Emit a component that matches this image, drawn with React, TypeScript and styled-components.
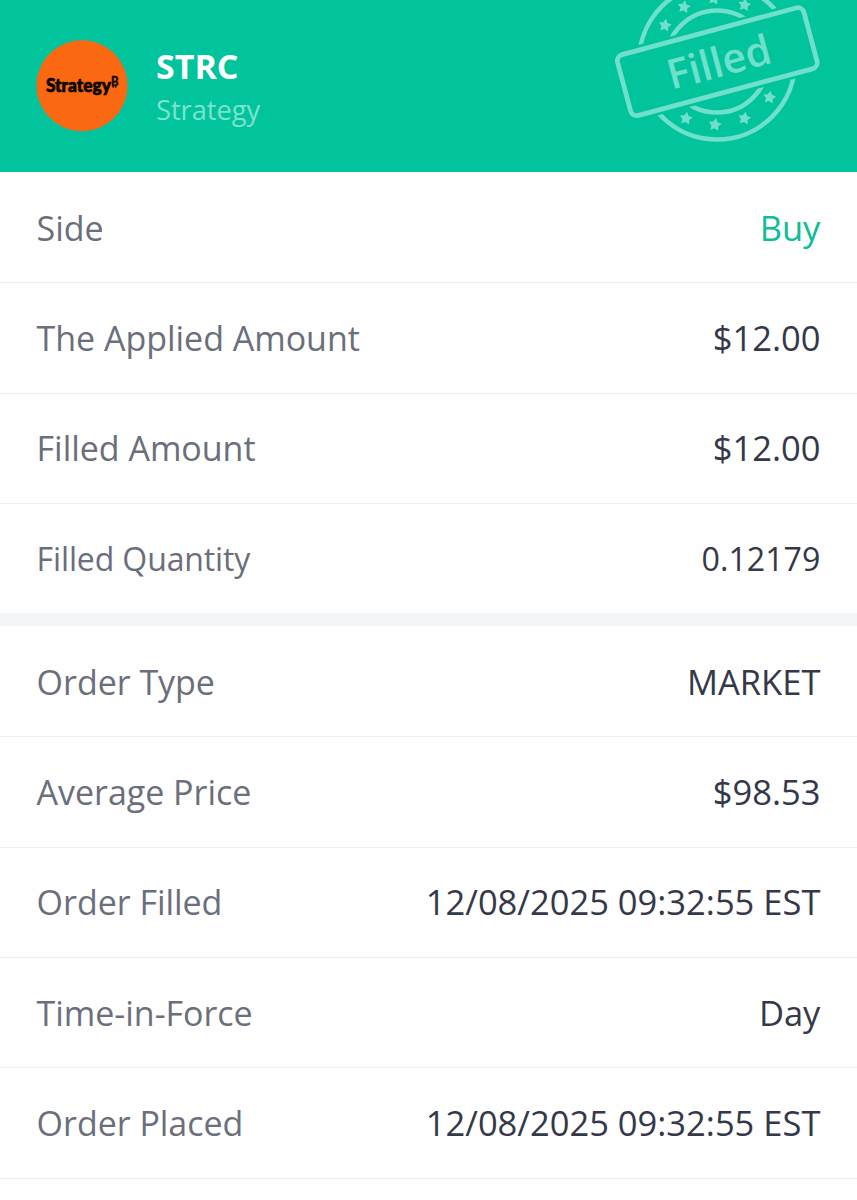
import React from "react";
import styled, { createGlobalStyle } from "styled-components";

const GlobalStyle = createGlobalStyle`
  body {
    margin: 0;
    background: #fff;
    font-family: "Open Sans", "Noto Sans", sans-serif;
  }
`;

const Page = styled.main`
  width: 857px;
  height: 1200px;
  overflow: hidden;
  background: #fefefe;
`;

const Header = styled.header`
  display: flex;
  align-items: flex-start;
  height: 172px;
  box-sizing: border-box;
  padding-left: 36px;
  background: #01c39c;
`;

const Logo = styled.svg`
  display: block;
  width: 92px;
  height: 92px;
  margin-top: 40px;
`;

const Names = styled.div`
  flex: 1;
  margin: 43px 0 0 28px;
`;

const Ticker = styled.h1`
  margin: 0 0 1px;
  font-size: 34px;
  line-height: 47px;
  font-weight: 700;
  color: #fff;
`;

const Company = styled.div`
  font-size: 27.2px;
  line-height: 38px;
  color: #7ce4ce;
`;

const Stamp = styled.svg`
  display: block;
  width: 240px;
  height: 172px;
  margin-right: 17px;
`;

const Section = styled.section<{ $gap?: boolean }>`
  box-sizing: border-box;
  height: ${(p) => (p.$gap ? "auto" : "441px")};
  padding-top: 0.8px;
  border-top: ${(p) => (p.$gap ? "13px solid #f4f5f9" : "0")};
`;

const Row = styled.div<{ $small?: boolean }>`
  display: flex;
  align-items: center;
  justify-content: space-between;
  box-sizing: border-box;
  height: 110.4px;
  padding: ${(p) => (p.$small ? "1px" : "0.4px")} 36.6px 0;
  border-bottom: 1px solid ${(p) => (p.$small ? "transparent" : "#ededf0")};
  font-size: ${(p) => (p.$small ? "32px" : "34px")};
  line-height: 48px;
  white-space: nowrap;
`;

const Label = styled.span<{ $small?: boolean }>`
  color: #6b6e7b;
  letter-spacing: ${(p) => (p.$small ? "-0.12px" : "-0.03px")};
`;

const Value = styled.span<{ $buy?: boolean; $small?: boolean }>`
  font-size: ${(p) => (p.$small ? "32.2px" : "34.5px")};
  color: ${(p) => (p.$buy ? "#0fbd97" : "#343849")};
`;

type Item = { label: string; value: string; buy?: boolean; small?: boolean };

const amounts: Item[] = [
  { label: "Side", value: "Buy", buy: true },
  { label: "The Applied Amount", value: "$12.00" },
  { label: "Filled Amount", value: "$12.00" },
  { label: "Filled Quantity", value: "0.12179", small: true },
];

const details: Item[] = [
  { label: "Order Type", value: "MARKET" },
  { label: "Average Price", value: "$98.53" },
  { label: "Order Filled", value: "12/08/2025 09:32:55 EST" },
  { label: "Time-in-Force", value: "Day" },
  { label: "Order Placed", value: "12/08/2025 09:32:55 EST" },
];

const stars: [number, number][] = [
  [65, 25.5],
  [84, 7],
  [114, -1.5],
  [144.5, 5],
  [86, 118.5],
  [115, 124.8],
  [144.5, 118.5],
  [169.5, 97.5],
];

const starPoints = Array.from({ length: 10 }, (_, i) => {
  const radius = i % 2 ? 3.6 : 6.8;
  const angle = (i * Math.PI) / 5 + Math.PI / 2 - 0.15;
  return `${(radius * Math.cos(angle)).toFixed(2)},${(-radius * Math.sin(angle)).toFixed(2)}`;
}).join(" ");

const rows = (items: Item[]) =>
  items.map((item) => (
    <Row key={item.label} $small={item.small}>
      <Label $small={item.small}>{item.label}</Label>
      <Value $buy={item.buy} $small={item.small}>{item.value}</Value>
    </Row>
  ));

export default function App() {
  return (
    <>
      <GlobalStyle />
      <Page>
        <Header>
          <Logo viewBox="0 0 92 92">
            <circle cx="46" cy="45.7" r="45.5" fill="#fa6912" />
            <g fill="#0d0704" stroke="#0d0704" fontFamily="Lato, sans-serif" fontWeight="900">
              <text x="9.9" y="51.6" fontSize="19" strokeWidth="0.7" textLength="72.6" lengthAdjust="spacingAndGlyphs">
                Strategy<tspan dy="-5.2" fontSize="12.5" strokeWidth="0.3">B</tspan>
              </text>
              <path d="M77.2 36v2M79.8 36v2M77.2 46v1.8M79.8 46v1.8" strokeWidth="1.3" />
            </g>
          </Logo>
          <Names>
            <Ticker>STRC</Ticker>
            <Company>Strategy</Company>
          </Names>
          <Stamp viewBox="0 0 240 172">
            <g fill="none" stroke="#6fe0cb" strokeWidth="4.6">
              <circle cx="117" cy="61.5" r="78" />
              <circle cx="117" cy="61.5" r="51" />
            </g>
            {stars.map(([x, y]) => (
              <polygon key={`${x}-${y}`} points={starPoints} transform={`translate(${x} ${y})`} fill="#6fe0cb" />
            ))}
            <g transform="translate(117.3 61.7) rotate(-15)">
              <rect x="-100" y="-36.5" width="200" height="73" fill="#01c39c" />
              <rect x="-96.5" y="-31.5" width="193" height="63" rx="6.5" fill="none" stroke="#6fe0cb" strokeWidth="4.8" />
              <text x="1.5" y="15.3" textAnchor="middle" fontSize="41.3" fontWeight="600" fill="#6fe0cb">
                Filled
              </text>
            </g>
          </Stamp>
        </Header>
        <Section>{rows(amounts)}</Section>
        <Section $gap>{rows(details)}</Section>
      </Page>
    </>
  );
}
